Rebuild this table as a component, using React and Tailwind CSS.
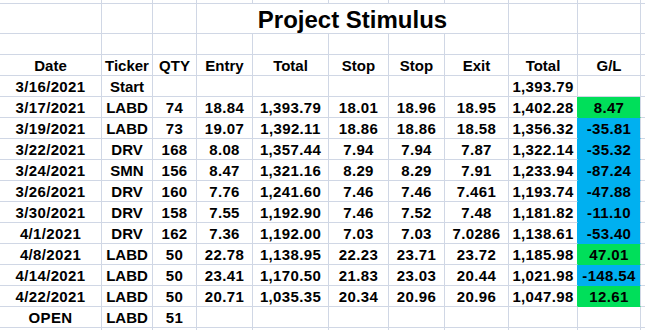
import React from "react";

const GRID = "grid grid-cols-[102px_51px_44px_56px_76px_60px_56px_64px_69px_63px_1fr]";
const LINE = "border-[#d0d7e5]";

const G = "#00df5a";
const B = "#00b0f0";

const rows = [
  ["3/16/2021", "Start", "", "", "", "", "", "", "1,393.79", "", null],
  ["3/17/2021", "LABD", "74", "18.84", "1,393.79", "18.01", "18.96", "18.95", "1,402.28", "8.47", "g"],
  ["3/19/2021", "LABD", "73", "19.07", "1,392.11", "18.86", "18.86", "18.58", "1,356.32", "-35.81", "b"],
  ["3/22/2021", "DRV", "168", "8.08", "1,357.44", "7.94", "7.94", "7.87", "1,322.14", "-35.32", "b"],
  ["3/24/2021", "SMN", "156", "8.47", "1,321.16", "8.29", "8.29", "7.91", "1,233.94", "-87.24", "b"],
  ["3/26/2021", "DRV", "160", "7.76", "1,241.60", "7.46", "7.46", "7.461", "1,193.74", "-47.88", "b"],
  ["3/30/2021", "DRV", "158", "7.55", "1,192.90", "7.46", "7.52", "7.48", "1,181.82", "-11.10", "b"],
  ["4/1/2021", "DRV", "162", "7.36", "1,192.00", "7.03", "7.03", "7.0286", "1,138.61", "-53.40", "b"],
  ["4/8/2021", "LABD", "50", "22.78", "1,138.95", "22.23", "23.71", "23.72", "1,185.98", "47.01", "g"],
  ["4/14/2021", "LABD", "50", "23.41", "1,170.50", "21.83", "23.03", "20.44", "1,021.98", "-148.54", "b"],
  ["4/22/2021", "LABD", "50", "20.71", "1,035.35", "20.34", "20.96", "20.96", "1,047.98", "12.61", "g"],
  ["OPEN", "LABD", "51", "", "", "", "", "", "", "", null],
];

const headers = ["Date", "Ticker", "QTY", "Entry", "Total", "Stop", "Stop", "Exit", "Total", "G/L"];

function Cell({ children, cls = "", num = false }) {
  return (
    <div
      className={`flex items-end justify-center pb-[2px] leading-[15px] whitespace-nowrap overflow-visible border-r border-b ${LINE} ${
        num ? "tracking-[0.35px]" : ""
      } ${cls}`}
    >
      {children}
    </div>
  );
}

function EmptyRow({ h }) {
  return (
    <div className={`${GRID} ${h}`}>
      {Array.from({ length: 10 }).map((_, i) => (
        <div key={i} className={`border-r border-b ${LINE}`} />
      ))}
      <div className={`border-b ${LINE}`} />
    </div>
  );
}

export default function App() {
  return (
    <div className="w-[645px] h-[330px] overflow-hidden bg-white text-black font-bold text-[15px] font-['Liberation_Sans',Arial,sans-serif]">
      <EmptyRow h="h-[4px]" />
      {/* title row */}
      <div className={`${GRID} h-[30px]`}>
        <div className={`border-r border-b ${LINE}`} />
        <div className={`border-r border-b ${LINE}`} />
        <div className={`border-r border-b ${LINE}`} />
        <div
          className={`col-span-5 flex items-end justify-center pb-[1px] border-r border-b ${LINE} text-[24px] leading-[24px] whitespace-nowrap`}
        >
          Project Stimulus
        </div>
        <div className={`border-r border-b ${LINE}`} />
        <div className={`border-r border-b ${LINE}`} />
        <div className={`border-b ${LINE}`} />
      </div>
      <EmptyRow h="h-[21px]" />
      {/* header */}
      <div className={`${GRID} h-[21px]`}>
        {headers.map((t, i) => (
          <Cell key={i}>{t}</Cell>
        ))}
        <div className={`border-b ${LINE}`} />
      </div>
      {rows.map((r, ri) => {
        const fill = r[10];
        const bg = fill === "g" ? "bg-[#00df5a] border-b-[#00df5a]" : fill === "b" ? "bg-[#00b0f0] border-b-[#00b0f0]" : "";
        const prevR = fill === "g" ? "border-r-[#00df5a]" : fill === "b" ? "border-r-[#00b0f0]" : "";
        return (
          <div key={ri} className={`${GRID} h-[21px]`}>
            {r.slice(0, 10).map((v, ci) => (
              <Cell
                key={ci}
                num={ci >= 2 || ci === 0}
                cls={ci === 9 ? bg : ci === 8 ? prevR : ""}
              >
                {v}
              </Cell>
            ))}
            <div className={`border-b ${LINE}`} />
          </div>
        );
      })}
      <EmptyRow h="h-[21px]" />
    </div>
  );
}
